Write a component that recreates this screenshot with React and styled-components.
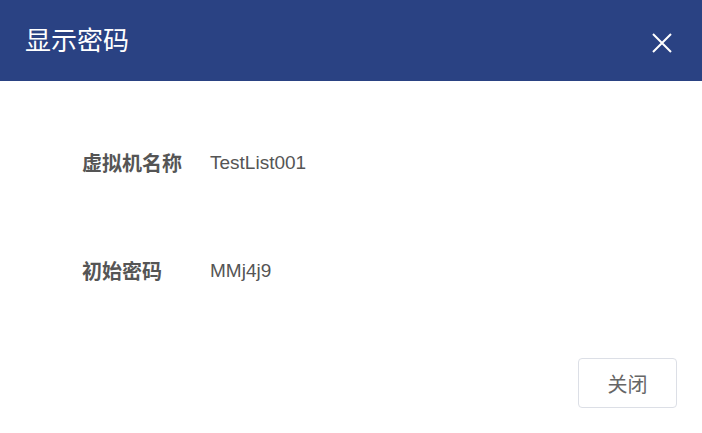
import React from 'react';
import styled, { createGlobalStyle } from 'styled-components';

const GlobalStyle = createGlobalStyle`
  html, body {
    margin: 0;
    padding: 0;
    background: #fff;
    font-family: "Liberation Sans", Arial, "Noto Sans CJK SC", sans-serif;
  }
`;

const Dialog = styled.div`
  width: 702px;
  height: 433px;
  display: flex;
  flex-direction: column;
  background: #fff;
`;

const Header = styled.div`
  height: 81px;
  background: #2a4283;
  display: flex;
  align-items: center;
  justify-content: space-between;
  padding: 0 29px 0 25px;
  box-sizing: border-box;
`;

const Title = styled.h2`
  margin: 0 0 4px;
  font-size: 26px;
  line-height: 30px;
  font-weight: normal;
  color: #fff;
  font-family: "Noto Sans CJK SC", sans-serif;
`;

const CloseButton = styled.button`
  width: 22px;
  height: 22px;
  padding: 0;
  border: none;
  background: transparent;
  display: flex;
  align-items: center;
  justify-content: center;
  margin-top: 4px;
  cursor: pointer;
`;

const Body = styled.div`
  flex: 1;
  display: flex;
  flex-direction: column;
  gap: 80px;
  padding: 67px 0 0 82px;
`;

const Row = styled.div`
  display: grid;
  grid-template-columns: 128px 1fr;
  align-items: center;
  height: 28px;
`;

const Label = styled.span`
  font-size: 20px;
  font-weight: bold;
  color: #555;
  font-family: "Noto Sans CJK SC", sans-serif;
`;

const Value = styled.span`
  font-size: 19px;
  color: #555;
`;

const Footer = styled.div`
  display: flex;
  justify-content: flex-end;
  padding: 0 25px 25px 0;
`;

const Button = styled.button`
  width: 99px;
  height: 50px;
  border: 1px solid #dcdfe6;
  border-radius: 4px;
  background: #fff;
  color: #666;
  font-size: 20px;
  font-family: "Noto Sans CJK SC", sans-serif;
  cursor: pointer;
`;

const fields = [
  { label: '虚拟机名称', value: 'TestList001' },
  { label: '初始密码', value: 'MMj4j9' },
];

export default function App() {
  return (
    <>
      <GlobalStyle />
      <Dialog>
        <Header>
          <Title>显示密码</Title>
          <CloseButton aria-label="close">
            <svg width="20" height="20" viewBox="0 0 20 20">
              <path d="M1 1 L19 19 M19 1 L1 19" stroke="#fff" strokeWidth="2" />
            </svg>
          </CloseButton>
        </Header>
        <Body>
          {fields.map(f => (
            <Row key={f.label}>
              <Label>{f.label}</Label>
              <Value>{f.value}</Value>
            </Row>
          ))}
        </Body>
        <Footer>
          <Button>关闭</Button>
        </Footer>
      </Dialog>
    </>
  );
}
